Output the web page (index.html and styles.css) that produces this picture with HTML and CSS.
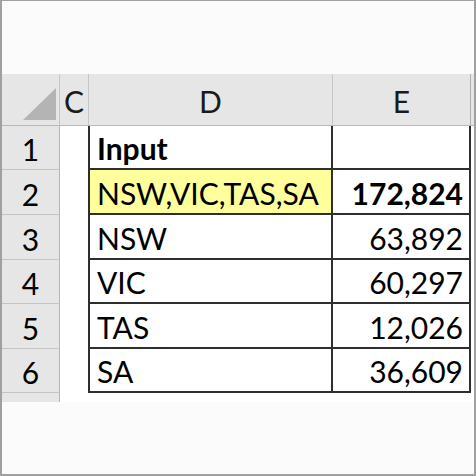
FILE: index.html
```html
<!DOCTYPE html>
<html>
<head>
<meta charset="utf-8">
<link rel="stylesheet" href="styles.css">
</head>
<body>
<div class="frame">
  <div class="sheet">
    <div class="row hdr">
      <div class="rn corner">
        <svg width="58" height="51" viewBox="0 0 58 51"><polygon points="54,14 54,46 21,46" fill="#b4b4b4"/></svg>
      </div>
      <div class="ch c">C</div>
      <div class="ch d">D</div>
      <div class="ch e">E</div>
      <div class="ch rest"></div>
    </div>
    <div class="row h44 first">
      <div class="rn">1</div><div class="cc"></div>
      <div class="cell d b">Input</div><div class="cell e"></div>
    </div>
    <div class="row h45">
      <div class="rn">2</div><div class="cc"></div>
      <div class="cell d yellow">NSW,VIC,TAS,SA</div><div class="cell e num b">172,824</div>
    </div>
    <div class="row h45">
      <div class="rn">3</div><div class="cc"></div>
      <div class="cell d">NSW</div><div class="cell e num">63,892</div>
    </div>
    <div class="row h44">
      <div class="rn">4</div><div class="cc"></div>
      <div class="cell d">VIC</div><div class="cell e num">60,297</div>
    </div>
    <div class="row h45">
      <div class="rn">5</div><div class="cc"></div>
      <div class="cell d">TAS</div><div class="cell e num">12,026</div>
    </div>
    <div class="row h44">
      <div class="rn">6</div><div class="cc"></div>
      <div class="cell d">SA</div><div class="cell e num">36,609</div>
    </div>
    <div class="row partial">
      <div class="rn"></div>
    </div>
  </div>
</div>
</body>
</html>
```
FILE: styles.css
```css
html, body {
  margin: 0;
  padding: 0;
}
body {
  font-family: "Lato", "Liberation Sans", sans-serif;
  color: #000;
}
.frame {
  width: 476px;
  height: 476px;
  box-sizing: border-box;
  border-style: solid;
  border-color: #a0a0a0;
  border-width: 1px 2px 2px 2px;
  background: #fbfbfb;
  padding-top: 73px;
}
.sheet {
  background: #fff;
  width: 472px;
}
.row {
  display: flex;
  box-sizing: border-box;
}
.hdr {
  height: 52px;
  background: #e6e6e6;
  border-bottom: 1px solid #b9b9b9;
}
.h44 { height: 44px; }
.h45 { height: 45px; }
.partial { height: 9px; }
.rn {
  width: 58px;
  flex: none;
  box-sizing: border-box;
  background: #e6e6e6;
  border-right: 1px solid #b5b5b5;
  border-bottom: 1px solid #c4c4c4;
  display: flex;
  align-items: flex-end;
  justify-content: center;
  padding-bottom: 5px;
  font-size: 30px;
  line-height: 1;
}
.partial .rn { border-bottom: none; padding: 0; }
.corner {
  padding: 0;
  border-bottom: none;
  border-right: 1px solid #c6c6c6;
  display: block;
}
.corner svg { display: block; }
.ch {
  box-sizing: border-box;
  border-right: 1px solid #c6c6c6;
  display: flex;
  align-items: flex-end;
  justify-content: center;
  padding-bottom: 9px;
  font-size: 30px;
  line-height: 1;
  color: #1a1a1a;
}
.ch.c { width: 29px; }
.ch.d { width: 244px; }
.ch.e { width: 138px; border-right: 1px solid #b0b0b0; }
.ch.rest { flex: 1; border-right: none; }
.cc {
  width: 28px;
  flex: none;
}
.cell {
  box-sizing: border-box;
  border-right: 2px solid #2e2e2e;
  border-bottom: 2px solid #2e2e2e;
  display: flex;
  align-items: flex-end;
  padding: 0 8px 5px 7px;
  font-size: 30px;
  line-height: 1;
  white-space: nowrap;
}
.cell.d {
  width: 245px;
  border-left: 2px solid #2e2e2e;
}
.cell.e {
  width: 138px;
  justify-content: flex-end;
}
.cell.num { padding-right: 6px; }
.b { font-weight: 700; }
.yellow { background: #ffff9c; }
```
